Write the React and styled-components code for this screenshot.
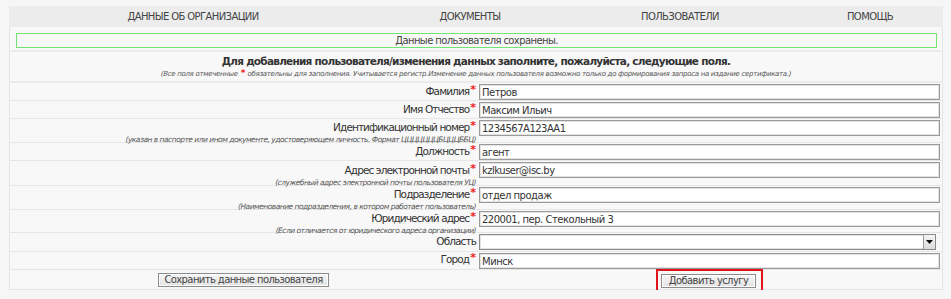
import React from "react";
import styled, { createGlobalStyle } from "styled-components";

const GlobalStyle = createGlobalStyle`
  html, body {
    margin: 0;
    padding: 0;
    background: #f6f6f6;
  }
  body {
    font-family: Tahoma, "DejaVu Sans", Verdana, sans-serif;
    color: #333;
  }
`;

const Page = styled.div`
  padding: 6px 8px 0 9px;
  width: 934px;
`;

const Nav = styled.div`
  display: flex;
  height: 21px;
  background: #ececec;
`;

const NavItem = styled.div`
  width: ${(p) => p.w}px;
  display: flex;
  align-items: center;
  justify-content: center;
  font-size: 10px;
  letter-spacing: -0.6px;
  color: #444;
  text-transform: uppercase;
`;

const Panel = styled.div`
  border-left: 1px solid #e6e6e6;
  border-right: 1px solid #e6e6e6;
  border-bottom: 1px solid #e6e6e6;
  background: #f8f8f8;
`;

const MessageRow = styled.div`
  padding: 6px 5px 2px 6px;
  border-bottom: 2px solid #ebebeb;
`;

const Message = styled.div`
  border: 1px solid #72e472;
  height: 13px;
  line-height: 13px;
  text-align: center;
  font-size: 10px;
  letter-spacing: -0.6px;
  color: #444;
`;

const Intro = styled.div`
  height: 31px;
  padding-top: 2px;
  box-sizing: border-box;
  text-align: center;
  border-bottom: 2px solid #ebebeb;
`;

const Title = styled.div`
  font-weight: bold;
  font-size: 10.5px;
  letter-spacing: -0.75px;
  color: #333;
  line-height: 14px;
`;

const Note = styled.div`
  font-style: italic;
  font-size: ${(p) => p.size || 7.5}px;
  letter-spacing: ${(p) => p.ls ?? -0.5}px;
  color: #555;
  line-height: ${(p) => p.lh || 9}px;
  margin-top: ${(p) => p.mt || 0}px;
  text-align: ${(p) => p.align || "center"};
  white-space: nowrap;
`;

const Star = styled.span`
  color: #ee2222;
  font-weight: bold;
  font-size: ${(p) => p.size || 11}px;
  vertical-align: top;
  line-height: 1;
  letter-spacing: 0;
  margin: 0 ${(p) => p.gap || 0}px 0 1px;
`;

const Grid = styled.div`
  display: grid;
  grid-template-columns: 467px 1fr;
`;

const LabelCell = styled.div`
  height: ${(p) => p.h}px;
  box-sizing: border-box;
  border-bottom: 1px solid #e6e6e6;
  text-align: right;
  padding: ${(p) => p.pt ?? 1}px 1px 0 0;
`;

const FieldCell = styled.div`
  height: ${(p) => p.h}px;
  box-sizing: border-box;
  border-bottom: 1px solid #e6e6e6;
  padding: 1px 2px 0 2px;
`;

const Label = styled.div`
  font-size: 10.5px;
  letter-spacing: -0.9px;
  color: #333;
  line-height: 15px;
  white-space: nowrap;
`;

const TextInput = styled.input`
  display: block;
  width: 100%;
  height: 16px;
  box-sizing: border-box;
  border: 1px solid #9a9a9a;
  box-shadow: inset 0 0 0 1px #e2e2e2;
  background: #fff;
  padding: 0 2px;
  font-family: inherit;
  font-size: 10px;
  letter-spacing: -0.5px;
  color: #333;
  outline: none;
`;

const SelectWrap = styled.div`
  position: relative;
  width: 457px;
`;

const Select = styled.select`
  display: block;
  width: 100%;
  height: 16px;
  box-sizing: border-box;
  border: 1px solid #8a8a8a;
  box-shadow: inset 0 0 0 1px #e2e2e2;
  background: #fff;
  appearance: none;
  font-family: inherit;
  font-size: 10px;
  outline: none;
`;

const Arrow = styled.div`
  position: absolute;
  right: 1px;
  top: 1px;
  width: 12px;
  height: 14px;
  box-sizing: border-box;
  background: linear-gradient(#f4f4f4, #dcdcdc);
  border-left: 1px solid #9a9a9a;
  display: flex;
  align-items: center;
  justify-content: center;
`;

const ButtonCell = styled.div`
  display: flex;
  justify-content: center;
  align-items: flex-start;
  padding-top: ${(p) => p.pt}px;
  height: 19px;
  box-sizing: border-box;
`;

const Highlight = styled.div`
  margin-top: -1px;
  border: 2px solid #e0141c;
  padding: 3px 5px 3px 3px;
  display: flex;
  position: relative;
  z-index: 1;
`;

const Button = styled.button`
  height: 14px;
  padding: 0 ${(p) => p.px || 6}px;
  border: 1px solid #8c8c8c;
  background: linear-gradient(#f6f6f6, #e2e2e2);
  box-shadow: inset 0 0 0 1px #fff;
  font-family: inherit;
  font-size: 10px;
  letter-spacing: -0.6px;
  color: #444;
  line-height: 12px;
  cursor: pointer;
`;

const navItems = [
  { t: "Данные об организации", w: 368 },
  { t: "Документы", w: 186 },
  { t: "Пользователи", w: 234 },
  { t: "Помощь", w: 146 },
];

const fields = [
  { label: "Фамилия", value: "Петров", h: 18 },
  { label: "Имя Отчество", value: "Максим Ильич", h: 18 },
  {
    label: "Идентификационный номер",
    note: "(указан в паспорте или ином документе, удостоверяющем личность. Формат ЦЦЦЦЦЦЦБЦЦЦББЦ)",
    value: "1234567А123АА1",
    h: 24,
  },
  { label: "Должность", value: "агент", h: 18 },
  {
    label: "Адрес электронной почты",
    note: "(служебный адрес электронной почты пользователя УЦ)",
    value: "kzlkuser@isc.by",
    h: 25,
    pt: 2,
  },
  {
    label: "Подразделение",
    note: "(Наименование подразделения, в котором работает пользователь)",
    value: "отдел продаж",
    h: 24,
  },
  {
    label: "Юридический адрес",
    note: "(Если отличается от юридического адреса организации)",
    value: "220001, пер. Стекольный 3",
    h: 23,
  },
  { label: "Область", select: true, noStar: true, h: 19, pt: 1 },
  { label: "Город", value: "Минск", h: 18, pt: 0 },
];

export default function App() {
  return (
    <>
      <GlobalStyle />
      <Page>
        <Nav>
          {navItems.map((n) => (
            <NavItem key={n.t} w={n.w}>
              {n.t}
            </NavItem>
          ))}
        </Nav>
        <Panel>
          <MessageRow>
            <Message>Данные пользователя сохранены.</Message>
          </MessageRow>
          <Intro>
            <Title>
              Для добавления пользователя/изменения данных заполните, пожалуйста, следующие поля.
            </Title>
            <Note size={7} ls={-0.3} lh={10} mt={1}>
              (Все поля отмеченные <Star size={9} gap={2}>*</Star>обязательны для заполнения.
              Учитывается регистр.Изменение данных пользователя возможно только до формирования
              запроса на издание сертификата.)
            </Note>
          </Intro>
          <Grid>
            {fields.map((f) => (
              <React.Fragment key={f.label}>
                <LabelCell h={f.h} pt={f.pt}>
                  <Label>
                    {f.label}
                    {!f.noStar && <Star>*</Star>}
                  </Label>
                  {f.note && <Note align="right">{f.note}</Note>}
                </LabelCell>
                <FieldCell h={f.h}>
                  {f.select ? (
                    <SelectWrap>
                      <Select defaultValue="">
                        <option value=""></option>
                      </Select>
                      <Arrow>
                        <svg width="7" height="4" viewBox="0 0 7 4">
                          <path d="M0 0h7L3.5 4z" fill="#111" />
                        </svg>
                      </Arrow>
                    </SelectWrap>
                  ) : (
                    <TextInput defaultValue={f.value} />
                  )}
                </FieldCell>
              </React.Fragment>
            ))}
            <ButtonCell pt={3}>
              <Button px={5}>Сохранить данные пользователя</Button>
            </ButtonCell>
            <ButtonCell pt={0}>
              <Highlight>
                <Button px={7}>Добавить услугу</Button>
              </Highlight>
            </ButtonCell>
          </Grid>
        </Panel>
      </Page>
    </>
  );
}
